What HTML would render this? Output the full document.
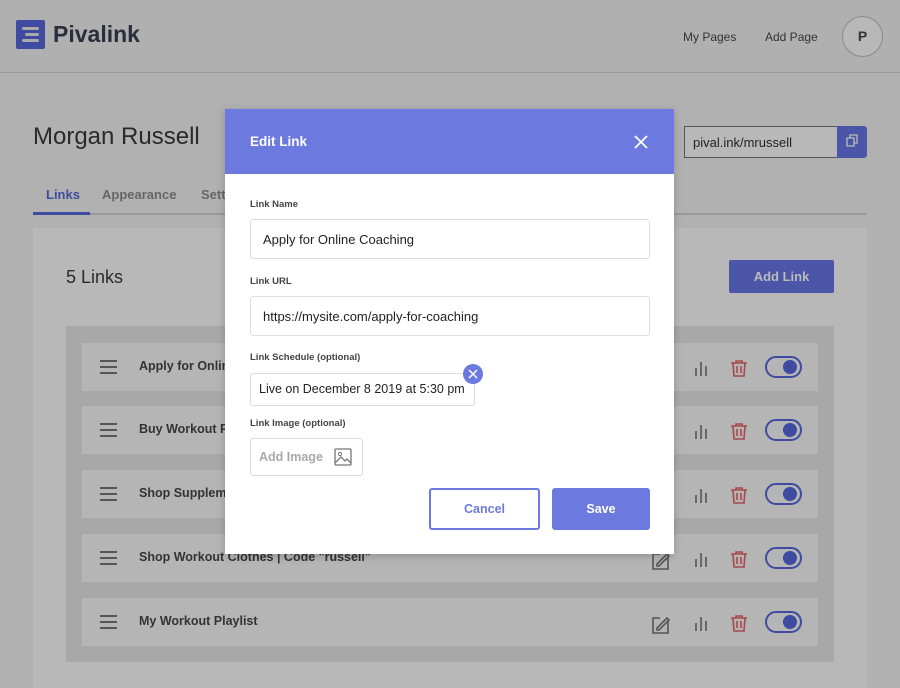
<!DOCTYPE html>
<html><head><style>
*{box-sizing:border-box;margin:0;padding:0}
body{width:900px;height:675px;overflow:hidden;position:relative;background:#b1b1b1;font-family:"Liberation Sans",sans-serif}
.abs{position:absolute}
.row{position:absolute;left:82px;width:736px;height:48px;background:#b5b5b5}
.row .ham{position:absolute;left:18px;top:17px;width:17px;height:14px;border-top:2px solid #555;border-bottom:2px solid #555}
.row .ham:after{content:"";position:absolute;left:0;right:0;top:4px;border-top:2px solid #555}
.row .t{position:absolute;left:57px;top:16px;font-size:12.5px;font-weight:bold;color:#333}
.tog{position:absolute;left:683px;top:13px;width:37px;height:22px;border:2px solid #3f4ba0;border-radius:11px}
.tog:after{content:"";position:absolute;right:3px;top:2px;width:14px;height:14px;border-radius:50%;background:#3f4ba0}
.lbl{position:absolute;left:25px;font-size:9.5px;font-weight:bold;color:#444}
.inp{position:absolute;left:25px;width:400px;height:40px;border:1px solid #ddd;border-radius:3px;font-size:13px;color:#222;padding:12px 12px;white-space:nowrap}
</style></head><body>
<div class="abs" style="left:0;top:0;width:900px;height:73px;border-bottom:1px solid #9c9c9c;background:#b0b0b0"></div>
<div class="abs" style="left:16px;top:20px;width:29px;height:29px;background:#3f4ba0;border-radius:2px">
<div class="abs" style="left:6px;top:7px;width:17px;height:3px;background:#aaa;border-radius:2px"></div>
<div class="abs" style="left:9px;top:13px;width:14px;height:3px;background:#aaa;border-radius:2px"></div>
<div class="abs" style="left:6px;top:19px;width:17px;height:3px;background:#aaa;border-radius:2px"></div></div>
<div class="abs" style="left:53px;top:21px;font-size:23px;font-weight:bold;color:#2c2c3c">Pivalink</div>
<div class="abs" style="left:683px;top:30px;font-size:12px;color:#333">My Pages</div>
<div class="abs" style="left:765px;top:30px;font-size:12px;color:#333">Add Page</div>
<div class="abs" style="left:842px;top:16px;width:41px;height:41px;border-radius:50%;border:1px solid #8a8a8a;background:#b8b8b8;text-align:center;line-height:39px;font-weight:bold;font-size:14px;color:#333">P</div>
<div class="abs" style="left:33px;top:123px;font-size:24px;color:#2a2a2a">Morgan Russell</div>
<div class="abs" style="left:684px;top:126px;width:154px;height:32px;border:1px solid #555;background:#b8b8b8;font-size:13px;padding:8px;color:#222">pival.ink/mrussell</div>
<div class="abs" style="left:837px;top:126px;width:30px;height:32px;background:#4b56a8;border-radius:0 3px 3px 0"></div>
<div class="abs" style="left:46px;top:187px;font-size:13px;font-weight:bold;color:#3f4ba0">Links</div>
<div class="abs" style="left:102px;top:187px;font-size:13px;font-weight:bold;color:#666">Appearance</div>
<div class="abs" style="left:201px;top:187px;font-size:13px;font-weight:bold;color:#666">Settings</div>
<div class="abs" style="left:33px;top:213px;width:834px;height:2px;background:#999"></div>
<div class="abs" style="left:33px;top:212px;width:57px;height:3px;background:#3f4ba0"></div>
<div class="abs" style="left:33px;top:228px;width:834px;height:460px;background:#b8b8b8"></div>
<div class="abs" style="left:66px;top:267px;font-size:18px;color:#2a2a2a">5 Links</div>
<div class="abs" style="left:729px;top:260px;width:105px;height:33px;background:#4b56a8;border-radius:2px;color:#bbb;font-size:13px;font-weight:bold;text-align:center;line-height:33px">Add Link</div>
<div class="abs" style="left:66px;top:326px;width:768px;height:336px;background:#a8a8a8"></div>
<div class="row" style="top:343px"><div class="ham"></div><div class="t">Apply for Online Coaching</div><div class="tog"></div></div>
<div class="row" style="top:406px"><div class="ham"></div><div class="t">Buy Workout Plans</div><div class="tog"></div></div>
<div class="row" style="top:470px"><div class="ham"></div><div class="t">Shop Supplements</div><div class="tog"></div></div>
<div class="row" style="top:534px"><div class="ham"></div><div class="t">Shop Workout Clothes | Code "russell"</div><div class="tog"></div></div>
<div class="row" style="top:598px"><div class="ham"></div><div class="t">My Workout Playlist</div><div class="tog"></div></div>
<svg class="abs" style="left:0;top:0" width="900" height="675">
<g stroke="#555" stroke-width="1.6" fill="none">
<path d="M696 376v-8M701 376v-14M706 376v-10M696 439v-8M701 439v-14M706 439v-10M696 503v-8M701 503v-14M706 503v-10M696 567v-8M701 567v-14M706 567v-10M696 631v-8M701 631v-14M706 631v-10"/>
<path d="M668 556v13h-15v-15h7M657 564l10-10 2 2-10 10h-2z M668 620v13h-15v-15h7M657 628l10-10 2 2-10 10h-2z"/>
</g>
<g stroke="#a84848" stroke-width="1.6" fill="none">
<path d="M731 363h16M736 363v-2h6v2M733 363l1 13h10l1-13M737 366v7M741 366v7"/>
<path d="M731 426h16M736 426v-2h6v2M733 426l1 13h10l1-13M737 429v7M741 429v7"/>
<path d="M731 490h16M736 490v-2h6v2M733 490l1 13h10l1-13M737 493v7M741 493v7"/>
<path d="M731 554h16M736 554v-2h6v2M733 554l1 13h10l1-13M737 557v7M741 557v7"/>
<path d="M731 618h16M736 618v-2h6v2M733 618l1 13h10l1-13M737 621v7M741 621v7"/>
</g>
<path d="M847 138h7v8h-7zM850 138v-3h7v8h-3" stroke="#bbb" stroke-width="1.3" fill="none"/>
</svg>
<div class="abs" style="left:225px;top:109px;width:449px;height:445px;background:#fff;box-shadow:0 2px 8px rgba(0,0,0,.2)">
<div class="abs" style="left:0;top:0;width:449px;height:65px;background:#6c7ae0"></div>
<div class="abs" style="left:25px;top:25px;color:#fff;font-weight:bold;font-size:13.5px">Edit Link</div>
<svg class="abs" style="left:409px;top:26px" width="14" height="14"><path d="M1 1l12 12M13 1L1 13" stroke="#fff" stroke-width="1.8"/></svg>
<div class="lbl" style="top:90px">Link Name</div>
<div class="inp" style="top:110px">Apply for Online Coaching</div>
<div class="lbl" style="top:167px">Link URL</div>
<div class="inp" style="top:187px">https://mysite.com/apply-for-coaching</div>
<div class="lbl" style="top:243px">Link Schedule (optional)</div>
<div class="inp" style="top:264px;width:225px;height:33px;padding:8px 8px;font-size:12.5px">Live on December 8 2019 at 5:30 pm</div>
<div class="abs" style="left:238px;top:255px;width:20px;height:20px;border-radius:50%;background:#6c7ae0"><svg width="20" height="20"><path d="M6 6l8 8M14 6l-8 8" stroke="#fff" stroke-width="1.5"/></svg></div>
<div class="lbl" style="top:309px">Link Image (optional)</div>
<div class="abs" style="left:25px;top:329px;width:113px;height:38px;border:1px solid #ddd;border-radius:3px;font-size:12.5px;font-weight:bold;color:#aaa;padding:11px 8px">Add Image</div>
<svg class="abs" style="left:109px;top:339px" width="20" height="18"><rect x="1" y="1" width="16" height="16" rx="1" stroke="#777" stroke-width="1.3" fill="none"/><circle cx="6" cy="6" r="1.6" stroke="#777" fill="none"/><path d="M1 15l6-6 4 4 2-2 4 4" stroke="#777" stroke-width="1.3" fill="none"/></svg>
<div class="abs" style="left:204px;top:379px;width:111px;height:42px;border:2px solid #6c7ae0;border-radius:3px;color:#6c7ae0;font-weight:bold;font-size:12.5px;text-align:center;line-height:38px">Cancel</div>
<div class="abs" style="left:327px;top:379px;width:98px;height:42px;background:#6c7ae0;border-radius:3px;color:#fff;font-weight:bold;font-size:12.5px;text-align:center;line-height:42px">Save</div>
</div>
</body></html>
